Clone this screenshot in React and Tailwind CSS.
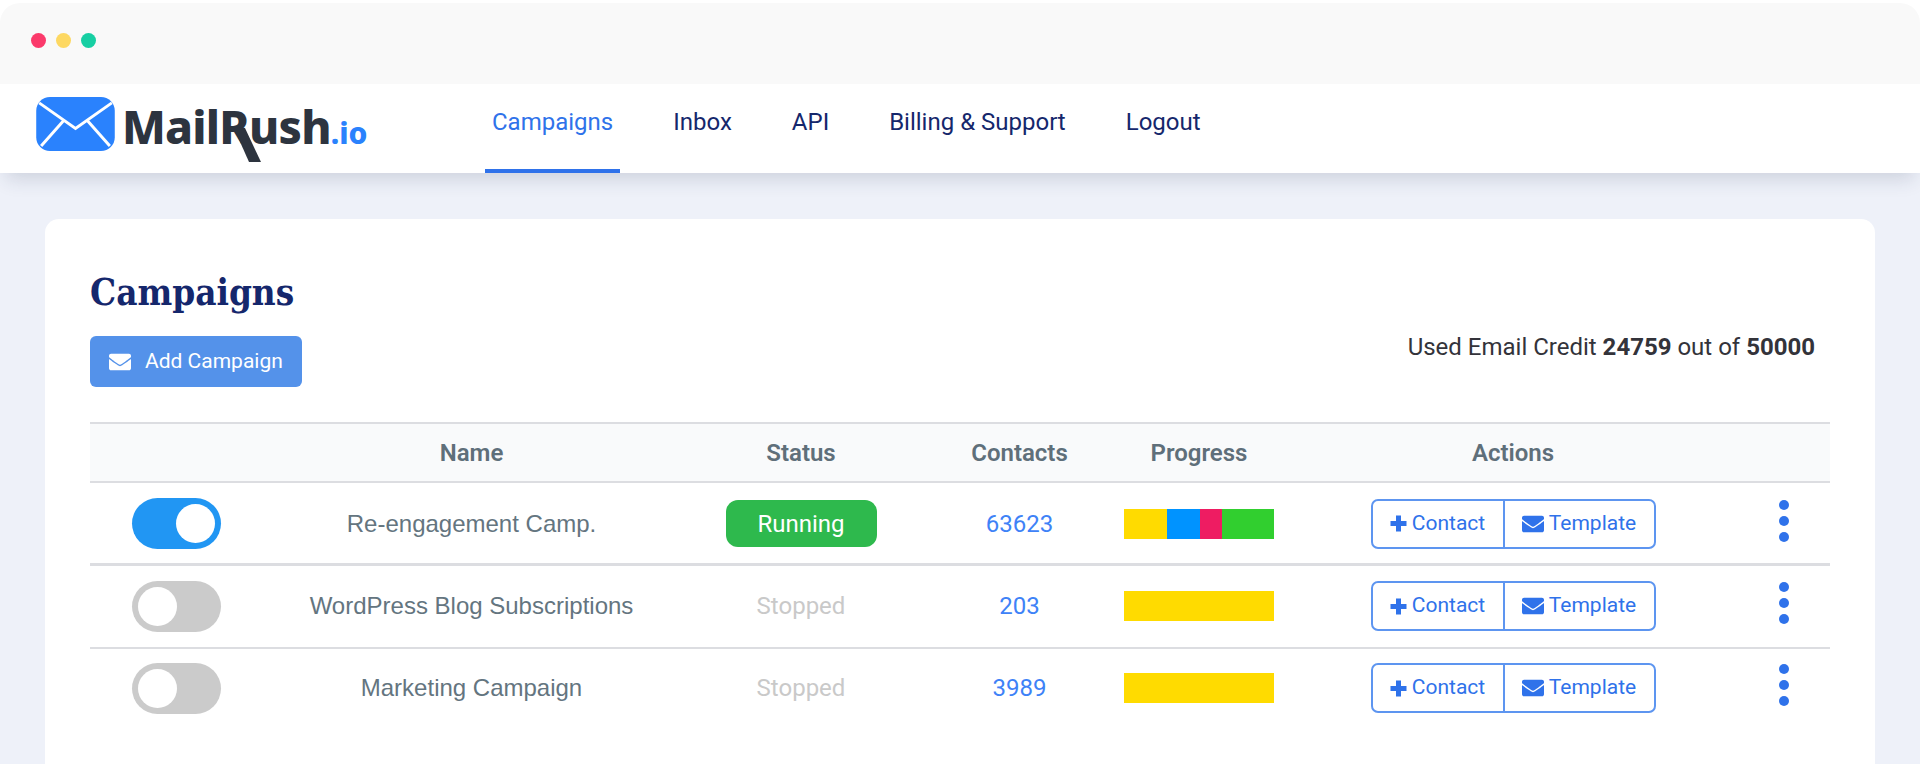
import { FaEnvelope } from "react-icons/fa";

const navItems = ["Campaigns", "Inbox", "API", "Billing & Support", "Logout"];

const rows = [
  {
    name: "Re-engagement Camp.",
    on: true,
    contacts: "63623",
    rowClass: "h-[83px] border-b-[3px] pt-px",
    progress: [
      { width: "w-[43px]", color: "bg-[#ffdb00]" },
      { width: "w-[33px]", color: "bg-[#0093ff]" },
      { width: "w-[22px]", color: "bg-[#ee1c62]" },
      { width: "w-[52px]", color: "bg-[#31cf2f]" },
    ],
  },
  {
    name: "WordPress Blog Subscriptions",
    on: false,
    contacts: "203",
    rowClass: "h-[83px] border-b-2 pb-px",
    progress: [{ width: "w-[150px]", color: "bg-[#ffdb00]" }],
  },
  {
    name: "Marketing Campaign",
    on: false,
    contacts: "3989",
    rowClass: "h-[78px]",
    progress: [{ width: "w-[150px]", color: "bg-[#ffdb00]" }],
  },
];

const columns = "grid grid-cols-[172px_419px_240px_197px_162px_466px_1fr] items-center text-center";

function Logo() {
  return (
    <div className="relative flex items-center w-[340px] h-[89px] ml-9">
      <svg width="79" height="54" viewBox="0 0 80 55" className="shrink-0 mb-[9px]">
        <rect width="80" height="55" rx="14" fill="#2a82fd" />
        <path
          d="M3 6 L40 32 L77 6 M28 24 L5 50 M52 24 L75 50"
          fill="none"
          stroke="#fff"
          strokeWidth="3"
        />
      </svg>
      <div className="ml-[7px] mb-[6px] flex items-baseline font-['Noto_Sans'] font-extrabold leading-none">
        <span className="text-[46px] text-[#2d343f] tracking-[-0.8px]">MailRush</span>
        <span className="text-[30px] text-[#2a82fd]">.io</span>
      </div>
      <svg width="28" height="36" viewBox="0 0 28 36" className="absolute left-[197px] top-[42px]">
        <path d="M0 0 L12 2 L28 36 L16 36 Z" fill="#2d343f" />
      </svg>
    </div>
  );
}

function Toggle({ on }) {
  return (
    <div
      className={`w-[89px] h-[51px] rounded-full flex items-center px-[6px] mx-auto ${
        on ? "bg-[#2196f3] justify-end" : "bg-[#cbcbcb] justify-start"
      }`}
    >
      <div className="w-[39px] h-[39px] rounded-full bg-white" />
    </div>
  );
}

function Actions() {
  return (
    <div className="flex w-[285px] h-[50px] mx-auto border-2 border-[#5d95f0] rounded-[7px] text-[#2f72ea] text-[21px]">
      <div className="w-[132px] flex items-center justify-center gap-[5px] border-r-2 border-[#5d95f0]">
        <svg width="17" height="17" viewBox="0 0 17 17" fill="currentColor">
          <path d="M6 0.5 H11 V6 H16.5 V11 H11 V16.5 H6 V11 H0.5 V6 H6 Z" />
        </svg>
        <span>Contact</span>
      </div>
      <div className="flex-1 flex items-center justify-center gap-[5px]">
        <FaEnvelope className="text-[22px]" />
        <span>Template</span>
      </div>
    </div>
  );
}

export default function App() {
  return (
    <div className="h-[764px] overflow-hidden bg-white pt-[3px] font-['Roboto',sans-serif]">
      <div className="h-[81px] bg-[#f9f9f9] rounded-t-[20px] flex items-center gap-[10px] pl-[31px] pb-[6px]">
        <div className="w-[15px] h-[15px] rounded-full bg-[#fb3a6b]" />
        <div className="w-[15px] h-[15px] rounded-full bg-[#fdd862]" />
        <div className="w-[15px] h-[15px] rounded-full bg-[#17cfa3]" />
      </div>

      <div className="relative z-10 h-[89px] bg-white flex shadow-[0_12px_18px_-6px_rgba(40,50,80,0.16)]">
        <Logo />
        <nav className="flex gap-[46px] ml-[109px] text-[24px] text-[#15276c]">
          {navItems.map((item, i) => (
            <div
              key={item}
              className={`px-[7px] pt-[20px] border-b-4 ${
                i === 0 ? "border-[#2f72ea] text-[#2f72ea]" : "border-transparent"
              }`}
            >
              {item}
            </div>
          ))}
        </nav>
      </div>

      <div className="bg-[#eef1f9] h-[591px] pt-[46px] px-[45px]">
        <div className="h-full bg-white rounded-t-[14px] px-[45px] pt-[52px]">
          <div className="flex justify-between h-[151px]">
            <div>
              <h1 className="font-['DejaVu_Serif_Condensed','DejaVu_Serif',serif] font-bold text-[36.5px] leading-[44px] text-[#15276c]">
                Campaigns
              </h1>
              <button className="mt-[21px] w-[212px] h-[51px] bg-[#5492ea] rounded-[6px] flex items-center pl-[19px] gap-[14px] text-white text-[21px]">
                <FaEnvelope className="text-[22px]" />
                <span>Add Campaign</span>
              </button>
            </div>
            <div className="pt-[58px] pr-[15px] text-[24px] text-[#33333a]">
              Used Email Credit <b>24759</b> out of <b>50000</b>
            </div>
          </div>

          <div className={`${columns} h-[61px] bg-[#f9fafb] border-y-2 border-[#dcdde1] text-[24px] font-semibold text-[#5f6f7a]`}>
            <div />
            <div>Name</div>
            <div>Status</div>
            <div>Contacts</div>
            <div>Progress</div>
            <div>Actions</div>
            <div />
          </div>

          {rows.map((row) => (
            <div key={row.name} className={`${columns} border-[#dcdde1] ${row.rowClass}`}>
              <Toggle on={row.on} />
              <div className="font-['Liberation_Sans',sans-serif] text-[24px] text-[#64757f]">{row.name}</div>
              <div className="text-[24px]">
                {row.on ? (
                  <div className="mx-auto w-[151px] h-[47px] rounded-[12px] bg-[#2eb94d] text-white flex items-center justify-center">
                    Running
                  </div>
                ) : (
                  <span className="text-[#c9c9c9]">Stopped</span>
                )}
              </div>
              <div className="text-[24px] text-[#3e82f7]">{row.contacts}</div>
              <div className="flex justify-center">
                {row.progress.map((seg) => (
                  <div key={seg.color} className={`h-[30px] ${seg.width} ${seg.color}`} />
                ))}
              </div>
              <Actions />
              <div className="flex flex-col items-center gap-[6px] pr-[8px] mb-[6px]">
                <div className="w-[10px] h-[10px] rounded-full bg-[#2f72ea]" />
                <div className="w-[10px] h-[10px] rounded-full bg-[#2f72ea]" />
                <div className="w-[10px] h-[10px] rounded-full bg-[#2f72ea]" />
              </div>
            </div>
          ))}
        </div>
      </div>
    </div>
  );
}
